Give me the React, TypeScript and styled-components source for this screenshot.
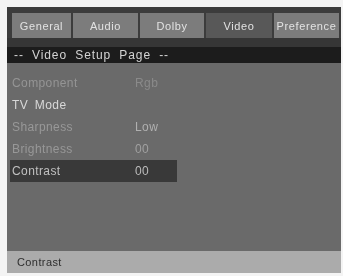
import React from 'react';
import styled, { createGlobalStyle } from 'styled-components';

const Global = createGlobalStyle`
  html, body {
    margin: 0;
    background: #f4f4f4;
  }
`;

const Screen = styled.div`
  margin: 7px 0 0 7px;
  width: 334px;
  height: 266px;
  background: #3c3c3c;
  display: flex;
  flex-direction: column;
  font-family: "Liberation Sans", Arial, sans-serif;
  font-size: 11px;
  filter: blur(0.5px);
`;

const TabBar = styled.div`
  display: flex;
  gap: 2px;
  padding: 6px 0 0 5px;
  height: 25px;
`;

const Tab = styled.div<{ $w: number; $active?: boolean }>`
  width: ${({ $w }) => $w}px;
  background: ${({ $active }) => ($active ? '#585858' : '#7c7c7c')};
  color: #e2e2e2;
  display: flex;
  align-items: center;
  justify-content: center;
  letter-spacing: 0.6px;
`;

const Gap = styled.div`
  height: 9px;
  background: #363636;
`;

const Header = styled.div`
  height: 16px;
  background: #1c1c1c;
  color: #d4d4d4;
  padding-left: 7px;
  display: flex;
  align-items: center;
  font-size: 12px;
  letter-spacing: 0.9px;
  word-spacing: 4px;
`;

const Content = styled.div`
  flex: 1;
  background: #6a6a6a;
  padding: 9px 0 0 3px;
`;

const Row = styled.div<{ $active?: boolean }>`
  width: 167px;
  height: 22px;
  display: grid;
  grid-template-columns: 123px 1fr;
  align-items: center;
  padding-left: 2px;
  box-sizing: border-box;
  background: ${({ $active }) => ($active ? '#393939' : 'transparent')};
  font-size: 12px;
  letter-spacing: 0.4px;
`;

const Cell = styled.span<{ $tone: string }>`
  color: ${({ $tone }) => $tone};
  word-spacing: 3px;
`;

const Status = styled.div`
  height: 22px;
  background: #ababab;
  color: #2e2e2e;
  display: flex;
  align-items: center;
  padding-left: 10px;
  letter-spacing: 0.4px;
`;

const tabs = [
  { label: 'General', w: 59 },
  { label: 'Audio', w: 65 },
  { label: 'Dolby', w: 64 },
  { label: 'Video', w: 66, active: true },
  { label: 'Preference', w: 65 },
];

const rows = [
  { label: 'Component', value: 'Rgb', lc: '#959595', vc: '#8a8a8a' },
  { label: 'TV Mode', value: '', lc: '#d8d8d8', vc: '#d8d8d8' },
  { label: 'Sharpness', value: 'Low', lc: '#989898', vc: '#b0b0b0' },
  { label: 'Brightness', value: '00', lc: '#989898', vc: '#a0a0a0' },
  { label: 'Contrast', value: '00', lc: '#c0c0c0', vc: '#bcbcbc', active: true },
];

export default function App() {
  return (
    <>
      <Global />
      <Screen>
        <TabBar>
          {tabs.map((t) => (
            <Tab key={t.label} $w={t.w} $active={t.active}>
              {t.label}
            </Tab>
          ))}
        </TabBar>
        <Gap />
        <Header>-- Video Setup Page --</Header>
        <Content>
          {rows.map((r) => (
            <Row key={r.label} $active={r.active}>
              <Cell $tone={r.lc}>{r.label}</Cell>
              <Cell $tone={r.vc}>{r.value}</Cell>
            </Row>
          ))}
        </Content>
        <Status>Contrast</Status>
      </Screen>
    </>
  );
}
